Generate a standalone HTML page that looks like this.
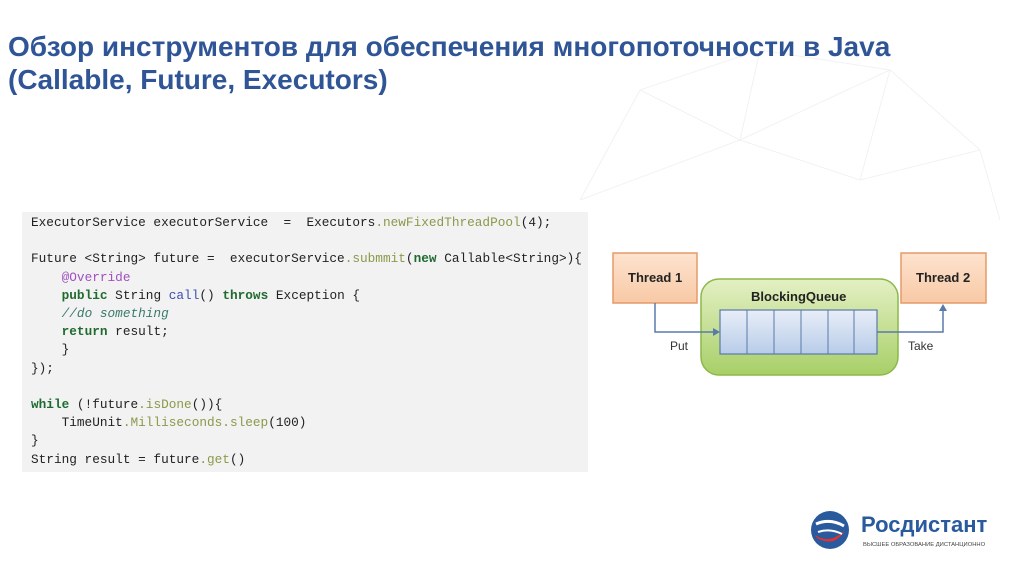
<!DOCTYPE html>
<html><head><meta charset="utf-8"><style>
body{margin:0;width:1024px;height:574px;background:#fff;position:relative;overflow:hidden;font-family:"Liberation Sans",sans-serif}
.t{position:absolute;left:8px;top:30px;color:#2f5597;font-weight:bold;font-size:28px;line-height:33px;white-space:nowrap}
.code{position:absolute;left:22px;top:212px;width:566px;height:260px;background:#f2f2f2}
pre{margin:0;position:absolute;left:31px;top:214px;font-family:"Liberation Mono",monospace;font-size:12.75px;line-height:18.2px;color:#222}
.k{color:#1f6b2f;font-weight:bold}.m{color:#8a9a4a}.a{color:#a050c0}.c{color:#3a7a6a;font-style:italic}.f{color:#3b4fb0}
</style></head><body>
<svg style="position:absolute;left:560px;top:30px" width="464" height="200" stroke="#f2f2f2" fill="none">
<path d="M20 170 L80 60 L200 20 L330 40 L420 120 L440 190 M80 60 L180 110 L200 20 M180 110 L330 40 M180 110 L300 150 L420 120 M300 150 L330 40 M20 170 L180 110"/>
</svg>
<div class="t">Обзор инструментов для обеспечения многопоточности в Java<br>(Callable, Future, Executors)</div>
<div class="code"></div>
<pre>ExecutorService executorService  =  Executors<span class="m">.newFixedThreadPool</span>(4);

Future &lt;String&gt; future =  executorService<span class="m">.submmit</span>(<span class="k">new</span> Callable&lt;String&gt;){
    <span class="a">@Override</span>
    <span class="k">public</span> String <span class="f">call</span>() <span class="k">throws</span> Exception {
    <span class="c">//do something</span>
    <span class="k">return</span> result;
    }
});

<span class="k">while</span> (!future<span class="m">.isDone</span>()){
    TimeUnit<span class="m">.Milliseconds.sleep</span>(100)
}
String result = future<span class="m">.get</span>()</pre>
<svg style="position:absolute;left:0;top:0" width="1024" height="574">
<defs><linearGradient id="o" x1="0" y1="0" x2="0" y2="1"><stop offset="0" stop-color="#fde3cf"/><stop offset="1" stop-color="#f8c9a5"/></linearGradient>
<linearGradient id="g" x1="0" y1="0" x2="0" y2="1"><stop offset="0" stop-color="#e4f0c4"/><stop offset="1" stop-color="#a8cf68"/></linearGradient>
<linearGradient id="b" x1="0" y1="0" x2="0" y2="1"><stop offset="0" stop-color="#e8eef8"/><stop offset="1" stop-color="#b8cce8"/></linearGradient></defs>
<rect x="613" y="253" width="84" height="50" fill="url(#o)" stroke="#e59a6a" stroke-width="1.5"/>
<rect x="901" y="253" width="85" height="50" fill="url(#o)" stroke="#e59a6a" stroke-width="1.5"/>
<rect x="701" y="279" width="197" height="96" rx="18" fill="url(#g)" stroke="#8cb84a" stroke-width="1.5"/>
<rect x="720" y="310" width="157" height="44" fill="url(#b)" stroke="#5a7aaa" stroke-width="1.2"/>
<g stroke="#5a7aaa"><line x1="747" y1="310" x2="747" y2="354"/><line x1="774" y1="310" x2="774" y2="354"/><line x1="801" y1="310" x2="801" y2="354"/><line x1="828" y1="310" x2="828" y2="354"/><line x1="854" y1="310" x2="854" y2="354"/></g>
<path d="M655 303 V332 H716" stroke="#5a7aaa" stroke-width="1.5" fill="none"/><path d="M720 332 l-7 -4 v8z" fill="#5a7aaa"/>
<path d="M877 332 H943 V308" stroke="#5a7aaa" stroke-width="1.5" fill="none"/><path d="M943 304 l-4 7 h8z" fill="#5a7aaa"/>
<g font-family="Liberation Sans" font-size="13" fill="#222" font-weight="bold"><text x="628" y="282">Thread 1</text><text x="916" y="282">Thread 2</text><text x="751" y="301">BlockingQueue</text></g>
<g font-family="Liberation Sans" font-size="12" fill="#333"><text x="670" y="350">Put</text><text x="908" y="350">Take</text></g>
<circle cx="830" cy="530" r="19" fill="#2a5a9e"/><path d="M815 535 q15 10 30 -5 q-10 18 -28 8z" fill="#d33"/><path d="M816 524 q14 -6 28 2" stroke="#fff" stroke-width="3" fill="none"/><path d="M818 532 q12 -4 24 2" stroke="#fff" stroke-width="2" fill="none"/>
<text x="861" y="532" font-family="Liberation Sans" font-weight="bold" font-size="22" fill="#2a5a9e">Росдистант</text>
<text x="863" y="546" font-family="Liberation Sans" font-size="5.8" fill="#444">ВЫСШЕЕ ОБРАЗОВАНИЕ ДИСТАНЦИОННО</text>
</svg>
</body></html>
